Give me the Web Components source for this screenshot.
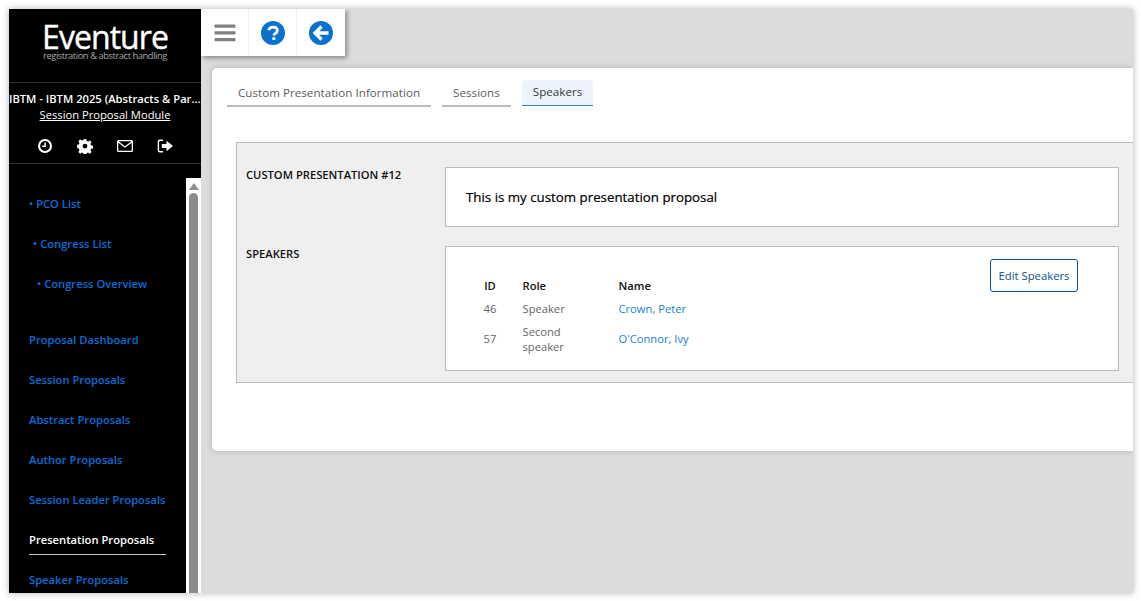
<!DOCTYPE html>
<html lang="en">
<head>
<meta charset="utf-8">
<title>Eventure</title>
<style>
  html, body {
    margin: 0;
    height: 601px;
    overflow: hidden;
    background: #fff;
    font-family: "Open Sans", "Liberation Sans", sans-serif;
  }
</style>
</head>
<body>
<app-shell>
  <side-bar slot="side">
    <nav-link indent="0" bullet>PCO List</nav-link>
    <nav-link indent="4" bullet>Congress List</nav-link>
    <nav-link indent="8" bullet>Congress Overview</nav-link>
    <nav-gap></nav-gap>
    <nav-link>Proposal Dashboard</nav-link>
    <nav-link>Session Proposals</nav-link>
    <nav-link>Abstract Proposals</nav-link>
    <nav-link>Author Proposals</nav-link>
    <nav-link>Session Leader Proposals</nav-link>
    <nav-link active>Presentation Proposals</nav-link>
    <nav-link>Speaker Proposals</nav-link>
  </side-bar>
  <top-toolbar slot="top"></top-toolbar>
  <content-card>
    <tab-bar>
      <tab-item>Custom Presentation Information</tab-item>
      <tab-item>Sessions</tab-item>
      <tab-item selected>Speakers</tab-item>
    </tab-bar>
    <detail-panel>
      <detail-row label="CUSTOM PRESENTATION #12" kind="title">This is my custom presentation proposal</detail-row>
      <detail-row label="SPEAKERS" kind="table"><speaker-table></speaker-table></detail-row>
    </detail-panel>
  </content-card>
</app-shell>

<script>
function shadow(el, html) {
  el.attachShadow({ mode: "open" }).innerHTML = html;
}

class AppShell extends HTMLElement {
  constructor() {
    super();
    shadow(this, `
      <style>
        :host {
          display: flex;
          width: 1124px;
          height: 584px;
          margin: 9px 0 0 9px;
          background: #dcdcdc;
          box-shadow: 0 0 7px rgba(0,0,0,0.3);
          overflow: hidden;
        }
        .side { flex: 0 0 192px; width: 192px; min-width: 0; }
        .main { flex: 1; min-width: 0; }
      </style>
      <div class="side"><slot name="side"></slot></div>
      <div class="main">
        <slot name="top"></slot>
        <slot></slot>
      </div>
    `);
  }
}

class SideBar extends HTMLElement {
  constructor() {
    super();
    shadow(this, `
      <style>
        :host {
          display: flex;
          flex-direction: column;
          width: 192px;
          height: 584px;
          background: #000;
          color: #fff;
          overflow: hidden;
        }
        .logo {
          height: 74px;
          box-sizing: border-box;
          padding-top: 13px;
          border-bottom: 1px solid #333;
          text-align: center;
          flex: none;
        }
        .brand {
          font-size: 32px;
          line-height: 29px;
          letter-spacing: -0.95px;
          font-weight: 400;
          -webkit-text-stroke: 0.4px #fff;
        }
        .tag {
          font-size: 9.4px;
          line-height: 10px;
          color: #a6a6a6;
          letter-spacing: -0.45px;
        }
        .event {
          padding-top: 8px;
          text-align: center;
          font-size: 11.2px;
          font-weight: 600;
          line-height: 16px;
          flex: none;
        }
        .event .name {
          white-space: nowrap;
          overflow: hidden;
          text-overflow: ellipsis;
        }
        .event .module {
          font-weight: 400;
          text-decoration: underline;
        }
        .icons {
          display: flex;
          justify-content: center;
          gap: 24px;
          height: 41px;
          box-sizing: border-box;
          padding-top: 15px;
          border-bottom: 1px solid #333;
          flex: none;
        }
        .icons svg { width: 16px; height: 16px; fill: #fff; }
        .scroll {
          display: flex;
          flex: 1;
          min-height: 0;
          margin-top: 14px;
        }
        .list {
          flex: 0 0 177px;
          box-sizing: border-box;
          padding: 6px 0 0 20px;
          overflow: hidden;
        }
        .bar {
          flex: 1;
          background: #fff;
          display: flex;
          flex-direction: column;
          align-items: center;
          padding-top: 5px;
          gap: 3px;
        }
        .arrow {
          width: 0;
          height: 0;
          border: 5px solid transparent;
          border-top: 0;
          border-bottom: 7px solid #8f8f8f;
        }
        .thumb {
          width: 9px;
          flex: 1;
          background: #8c8c8c;
          border-radius: 5px 5px 0 0;
        }
      </style>
      <div class="logo">
        <div class="brand">Eventure</div>
        <div class="tag">registration &amp; abstract handling</div>
      </div>
      <div class="event">
        <div class="name">IBTM - IBTM 2025 (Abstracts &amp; Parallel Sessions)</div>
        <div class="module">Session Proposal Module</div>
      </div>
      <div class="icons">
        <svg viewBox="0 0 16 16"><path fill-rule="evenodd" d="M8 1a7 7 0 1 0 0 14A7 7 0 0 0 8 1zm0 2.1a4.9 4.9 0 1 1 0 9.8 4.9 4.9 0 0 1 0-9.8z"/><path d="M7.4 4.5h1.4v4.4H5.2V7.600h2.200z"/></svg>
        <svg viewBox="0 0 16 16"><path fill-rule="evenodd" d="M6.700 1h2.600l.4 2 1.300.6 1.800-1.100 1.800 1.800-1.100 1.800.6 1.300 1.900.4v2.600l-1.900.4-.6 1.300 1.100 1.800-1.800 1.800-1.800-1.100-1.300.6-.4 1.900H6.700l-.4-1.900-1.300-.6-1.800 1.100-1.800-1.800 1.100-1.800-.6-1.300L0 9.400V6.800l1.900-.4.6-1.300L1.400 3.300l1.800-1.800L5 2.600l1.300-.6zM8 5.700a2.400 2.400 0 1 0 0 4.800 2.400 2.400 0 0 0 0-4.800z"/></svg>
        <svg viewBox="0 0 16 16"><path fill-rule="evenodd" d="M1.500 2h13A1.500 1.500 0 0 1 16 3.500v9a1.500 1.500 0 0 1-1.500 1.500h-13A1.500 1.500 0 0 1 0 12.500v-9A1.500 1.500 0 0 1 1.500 2zm-.2 2.700v7.800c0 .1.100.2.200.2h13c.1 0 .2-.1.200-.2V4.700L8 9.700zM1.500 3.300l6.500 5 6.500-5z"/></svg>
        <svg viewBox="0 0 16 16"><path d="M6 1.500v1.400H3a.9.9 0 0 0-.9.900v8.400c0 .5.400.9.900.9h3v1.400H3a2.300 2.300 0 0 1-2.300-2.300V3.800A2.300 2.300 0 0 1 3 1.500z"/><path d="M9.500 2.800 16 8l-6.500 5.200V10H4.800V6h4.700z"/></svg>
      </div>
      <div class="scroll">
        <div class="list"><slot></slot></div>
        <div class="bar"><div class="arrow"></div><div class="thumb"></div></div>
      </div>
    `);
  }
}

class NavLink extends HTMLElement {
  constructor() {
    super();
    const indent = this.getAttribute("indent") || 0;
    const bullet = this.hasAttribute("bullet") ? "<span>•&nbsp;</span>" : "";
    shadow(this, `
      <style>
        :host {
          display: block;
          height: 40px;
          box-sizing: border-box;
          padding-left: ${indent}px;
          font-size: 11.2px;
          font-weight: 600;
          line-height: 40px;
          color: #0a6cd6;
          white-space: nowrap;
        }
        :host([active]) { color: #fff; }
        .text { display: inline-block; }
        :host([active]) .rule {
          position: absolute;
          width: 137px;
          height: 1px;
          margin-top: -6px;
          background: #c8c8c8;
        }
      </style>
      ${bullet}<span class="text"><slot></slot></span>
      <div class="rule"></div>
    `);
  }
}

class NavGap extends HTMLElement {
  constructor() {
    super();
    shadow(this, `<style>:host { display: block; height: 16px; }</style>`);
  }
}

class TopToolbar extends HTMLElement {
  constructor() {
    super();
    shadow(this, `
      <style>
        :host {
          display: flex;
          width: 144px;
          height: 47px;
          background: #fff;
          box-shadow: 2px 2px 5px rgba(0,0,0,0.4);
          position: relative;
        }
        .cell {
          flex: 0 0 48px;
          box-sizing: border-box;
          display: flex;
          align-items: center;
          justify-content: center;
          border-right: 1px solid #f0f0f0;
        }
        .cell:last-child { border-right: 0; }
        svg { display: block; }
      </style>
      <div class="cell">
        <svg width="22" height="18" viewBox="0 0 22 18" fill="#808080">
          <rect x="0.500" y="0.500" width="21" height="3.300" rx="0.800"/>
          <rect x="0.500" y="7.300" width="21" height="3.300" rx="0.800"/>
          <rect x="0.500" y="14" width="21" height="3.300" rx="0.800"/>
        </svg>
      </div>
      <div class="cell">
        <svg width="24" height="24" viewBox="0 0 24 24">
          <circle cx="12" cy="12" r="12" fill="#0a72cc"/>
          <path d="M7.800 9.300c.3-2.100 2-3.200 4.300-3.200 2.400 0 4.200 1.300 4.200 3.300 0 1.600-.9 2.300-1.900 3-.9.6-1.400 1-1.400 2" fill="none" stroke="#fff" stroke-width="2.800"/>
          <rect x="11.400" y="16.200" width="2.900" height="2.800" fill="#fff"/>
        </svg>
      </div>
      <div class="cell">
        <svg width="24" height="24" viewBox="0 0 24 24">
          <circle cx="12" cy="12" r="12" fill="#0a72cc"/>
          <path d="M12.500 5.500 6 12l6.500 6.500M6.500 12H19.500" fill="none" stroke="#fff" stroke-width="3.300"/>
        </svg>
      </div>
    `);
  }
}

class ContentCard extends HTMLElement {
  constructor() {
    super();
    shadow(this, `
      <style>
        :host {
          display: block;
          height: 383px;
          box-sizing: border-box;
          margin: 12px 0 0 11px;
          padding: 12px 0 0 15px;
          background: #fff;
          border-radius: 5px 0 0 5px;
          box-shadow: 0 0 6px rgba(0,0,0,0.2);
        }
      </style>
      <slot></slot>
    `);
  }
}

class TabBar extends HTMLElement {
  constructor() {
    super();
    shadow(this, `
      <style>
        :host { display: flex; gap: 11px; align-items: flex-start; }
      </style>
      <slot></slot>
    `);
  }
}

class TabItem extends HTMLElement {
  constructor() {
    super();
    shadow(this, `
      <style>
        :host {
          display: block;
          height: 27px;
          box-sizing: border-box;
          padding: 0 11px;
          font-size: 11.6px;
          font-weight: 500;
          letter-spacing: 0.03px;
          line-height: 26px;
          color: #5c5c5c;
          border-bottom: 2px solid #bdbdbd;
        }
        :host([selected]) {
          height: 26px;
          line-height: 24px;
          color: #3a3a3a;
          background: #ebf4fc;
          border-radius: 4px 4px 0 0;
          border-bottom: 1px solid #2e86d6;
        }
      </style>
      <slot></slot>
    `);
  }
}

class DetailPanel extends HTMLElement {
  constructor() {
    super();
    shadow(this, `
      <style>
        :host {
          display: block;
          height: 241px;
          box-sizing: border-box;
          margin: 35px 0 0 9px;
          padding: 24px 14px 0 9px;
          background: #efefef;
          border: 1px solid #bdbdbd;
          border-right: 0;
        }
      </style>
      <slot></slot>
    `);
  }
}

class DetailRow extends HTMLElement {
  constructor() {
    super();
    const title = this.getAttribute("kind") === "title";
    shadow(this, `
      <style>
        :host {
          display: flex;
          margin-bottom: 19px;
        }
        .label {
          flex: 0 0 199px;
          font-size: 11.2px;
          font-weight: 600;
          line-height: 16px;
          color: #111;
        }
        .box {
          flex: 1;
          box-sizing: border-box;
          background: #fff;
          border: 1px solid #bdbdbd;
          ${title
            ? "height: 60px; padding: 0 20px; font-size: 13.3px; font-weight: 500; line-height: 59px; color: #000; -webkit-text-stroke: 0.2px #000;"
            : "height: 125px;"}
        }
      </style>
      <div class="label"></div>
      <div class="box"><slot></slot></div>
    `);
    this.shadowRoot.querySelector(".label").textContent = this.getAttribute("label");
  }
}

class SpeakerTable extends HTMLElement {
  constructor() {
    super();
    shadow(this, `
      <style>
        :host {
          display: block;
          position: relative;
          height: 123px;
          box-sizing: border-box;
          padding: 31px 0 0 29.5px;
          font-size: 11.2px;
          color: #666;
          -webkit-text-stroke: 0;
        }
        table {
          border-collapse: collapse;
          line-height: 15px;
          table-layout: fixed;
        }
        th {
          font-weight: 600;
          color: #111;
          text-align: left;
          padding: 0 0 4px;
        }
        td { padding: 0; vertical-align: middle; }
        .id { width: 47px; text-align: center; padding-right: 18px; box-sizing: border-box; }
        .role { width: 96px; padding-right: 36px; box-sizing: border-box; }
        .name { width: 120px; }
        tbody tr:first-child td { height: 23px; }
        tbody tr:last-child td { height: 37px; }
        a { color: #1b7fd6; text-decoration: none; }
        button {
          position: absolute;
          top: 12px;
          right: 40px;
          width: 88px;
          height: 33px;
          padding: 0;
          background: #fff;
          border: 1px solid #0b4f94;
          border-radius: 3px;
          font: 11.3px "Open Sans", "Liberation Sans", sans-serif;
          color: #0b4f94;
        }
      </style>
      <table>
        <thead>
          <tr><th class="id">ID</th><th class="role">Role</th><th class="name">Name</th></tr>
        </thead>
        <tbody>
          <tr><td class="id">46</td><td class="role">Speaker</td><td class="name"><a>Crown, Peter</a></td></tr>
          <tr><td class="id">57</td><td class="role">Second speaker</td><td class="name"><a>O'Connor, Ivy</a></td></tr>
        </tbody>
      </table>
      <button>Edit Speakers</button>
    `);
  }
}

customElements.define("app-shell", AppShell);
customElements.define("side-bar", SideBar);
customElements.define("nav-link", NavLink);
customElements.define("nav-gap", NavGap);
customElements.define("top-toolbar", TopToolbar);
customElements.define("content-card", ContentCard);
customElements.define("tab-bar", TabBar);
customElements.define("tab-item", TabItem);
customElements.define("detail-panel", DetailPanel);
customElements.define("detail-row", DetailRow);
customElements.define("speaker-table", SpeakerTable);
</script>
</body>
</html>
